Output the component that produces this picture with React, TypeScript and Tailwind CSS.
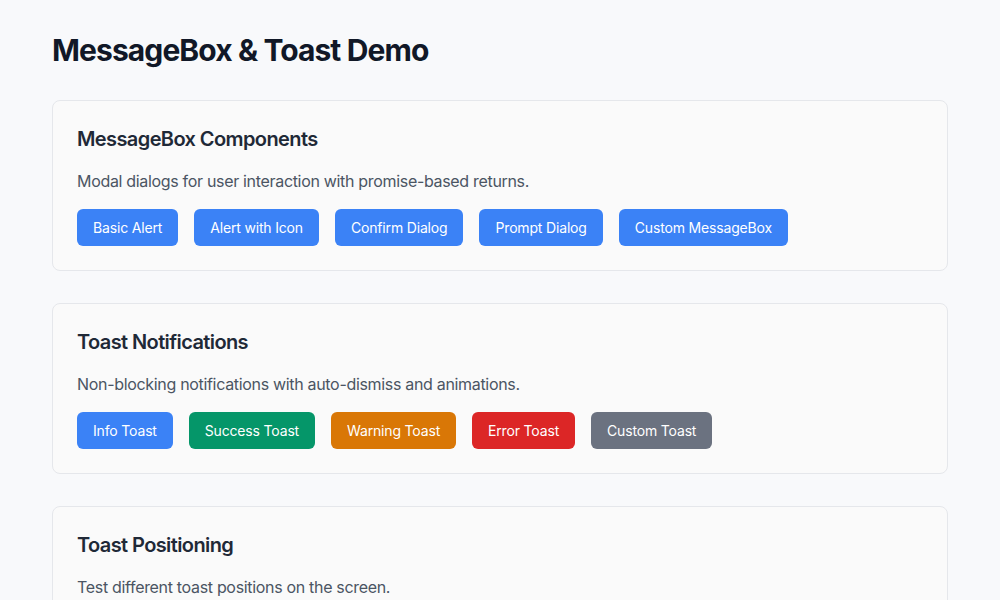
import React from 'react';

type Btn = { label: string; className: string };

const sections: { title: string; description: string; buttons: Btn[] }[] = [
  {
    title: 'MessageBox Components',
    description: 'Modal dialogs for user interaction with promise-based returns.',
    buttons: [
      { label: 'Basic Alert', className: 'bg-[#3b82f6]' },
      { label: 'Alert with Icon', className: 'bg-[#3b82f6]' },
      { label: 'Confirm Dialog', className: 'bg-[#3b82f6]' },
      { label: 'Prompt Dialog', className: 'bg-[#3b82f6]' },
      { label: 'Custom MessageBox', className: 'bg-[#3b82f6]' },
    ],
  },
  {
    title: 'Toast Notifications',
    description: 'Non-blocking notifications with auto-dismiss and animations.',
    buttons: [
      { label: 'Info Toast', className: 'bg-[#3b82f6]' },
      { label: 'Success Toast', className: 'bg-[#059669]' },
      { label: 'Warning Toast', className: 'bg-[#d97706]' },
      { label: 'Error Toast', className: 'bg-[#dc2626]' },
      { label: 'Custom Toast', className: 'bg-[#6b7280]' },
    ],
  },
  {
    title: 'Toast Positioning',
    description: 'Test different toast positions on the screen.',
    buttons: [
      { label: 'Top Right', className: 'bg-[#3b82f6]' },
      { label: 'Top Left', className: 'bg-[#3b82f6]' },
      { label: 'Bottom Right', className: 'bg-[#3b82f6]' },
      { label: 'Bottom Left', className: 'bg-[#3b82f6]' },
      { label: 'Top Center', className: 'bg-[#3b82f6]' },
    ],
  },
];

export default function App() {
  return (
    <div className="min-h-screen bg-[#f8f9fb] font-['Inter',sans-serif]">
      <div className="max-w-4xl mx-auto pt-8 pb-8">
        <h1 className="text-3xl font-bold text-[#111827] tracking-[-0.03em] mb-8">
          MessageBox &amp; Toast Demo
        </h1>

        {sections.map((section) => (
          <section
            key={section.title}
            className="bg-[#fafafa] border border-[#e5e7eb] rounded-lg p-6 mb-8"
          >
            <h2 className="text-xl font-semibold text-[#1f2937] tracking-[-0.03em] mb-4">
              {section.title}
            </h2>
            <p className="text-base text-[#4b5563] tracking-[-0.02em] mb-4">{section.description}</p>
            <div className="flex flex-wrap gap-4">
              {section.buttons.map((btn) => (
                <button
                  key={btn.label}
                  className={`${btn.className} text-white text-sm tracking-[-0.012em] px-4 py-[8.5px] rounded-md`}
                >
                  {btn.label}
                </button>
              ))}
            </div>
          </section>
        ))}
      </div>
    </div>
  );
}
